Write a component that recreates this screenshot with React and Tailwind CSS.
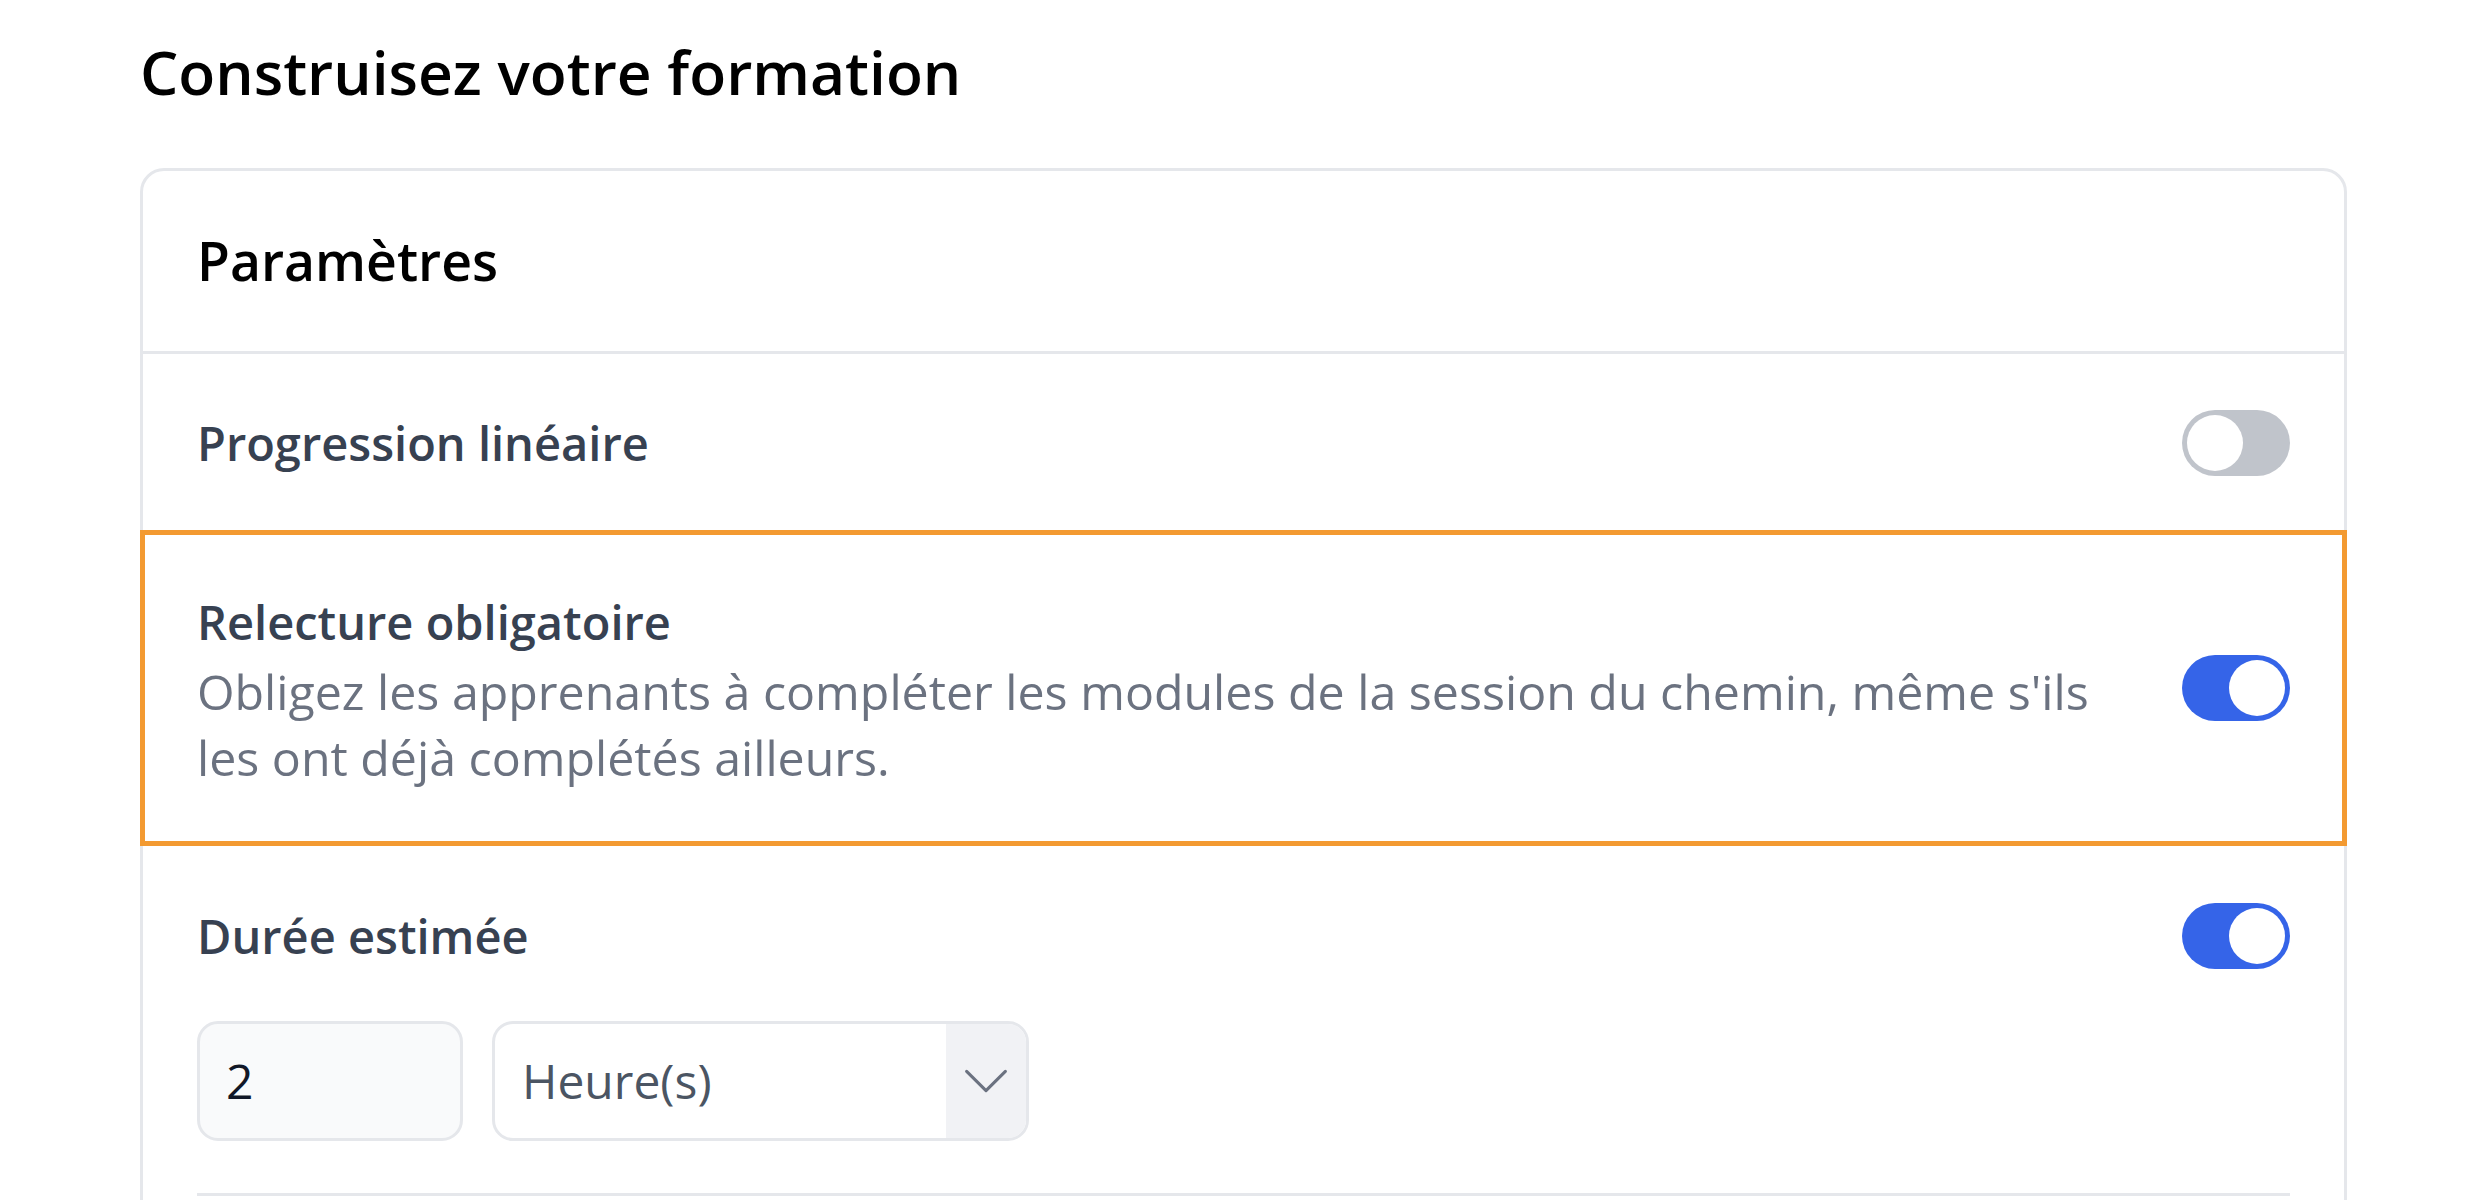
import { useState } from "react";

function classNames(...classes) {
  return classes.filter(Boolean).join(" ");
}

function Toggle({ enabled, onChange }) {
  return (
    <button
      type="button"
      onClick={() => onChange(!enabled)}
      className={classNames(
        enabled ? "bg-[#3564e8]" : "bg-[#c0c4cb]",
        "relative h-[66px] w-[108px] shrink-0 rounded-full"
      )}
    >
      <span
        className={classNames(
          enabled ? "translate-x-[42px]" : "translate-x-0",
          "absolute left-[5px] top-[5px] h-[56px] w-[56px] rounded-full bg-white"
        )}
      />
    </button>
  );
}

export default function App() {
  const [linear, setLinear] = useState(false); // progression linéaire
  const [review, setReview] = useState(true); // relecture obligatoire
  const [duration, setDuration] = useState(true); // durée estimée

  return (
    <div className="min-h-[1200px] bg-white font-['Open_Sans',sans-serif] pl-[140px] pt-[30px]">
      <h1 className="mb-[54px] text-[60.5px] font-semibold leading-[84px] text-black">
        Construisez votre formation
      </h1>

      <div className="w-[2207px] rounded-[24px] border-[3px] border-[#e5e7eb] bg-white">
        {/* header */}
        <div className="border-b-[3px] border-[#e5e7eb] px-[54px] py-[48px]">
          <h2 className="text-[53.5px] font-semibold leading-[84px] text-black">Paramètres</h2>
        </div>

        {/* progression linéaire */}
        <div className="flex items-center justify-between px-[54px] py-[53px]">
          <p className="text-[47px] font-semibold leading-[72px] text-[#374151]">
            Progression linéaire
          </p>
          <Toggle enabled={linear} onChange={setLinear} />
        </div>

        {/* relecture obligatoire, surlignée */}
        <div className="relative flex items-center justify-between gap-[60px] px-[54px] pt-[54px] pb-[56px]">
          <div className="max-w-[1920px]">
            <p className="text-[47px] font-semibold leading-[72px] text-[#374151]">
              Relecture obligatoire
            </p>
            <p className="text-[48.3px] leading-[66px] text-[#6b7280]">
              Obligez les apprenants à compléter les modules de la session du chemin, même s'ils les ont déjà complétés ailleurs.
            </p>
          </div>
          <Toggle enabled={review} onChange={setReview} />
          <span className="pointer-events-none absolute -left-[3px] -right-[3px] -top-[2px] bottom-0 border-[5px] border-[#f39a31]" />
        </div>

        {/* durée estimée */}
        <div className="px-[54px] pt-[54px]">
          <div className="flex items-center justify-between">
            <p className="text-[47px] font-semibold leading-[72px] text-[#374151]">Durée estimée</p>
            <Toggle enabled={duration} onChange={setDuration} />
          </div>
          <div className="mt-[49px] flex gap-[29px] pb-[52px]">
            <div className="flex h-[120px] w-[266px] items-center rounded-[21px] border-[3px] border-[#e5e7eb] bg-[#f9fafb] px-[26px]">
              <span className="text-[48px] leading-[72px] text-[#111827]">2</span>
            </div>
            <div className="flex h-[120px] w-[537px] overflow-hidden rounded-[21px] border-[3px] border-[#e5e7eb] bg-white">
              <span className="flex flex-1 items-center pl-[27px] text-[48px] leading-[72px] text-[#4b5563]">
                Heure(s)
              </span>
              <span className="flex w-[80px] items-center justify-center bg-[#f1f2f5]">
                <svg className="h-[62px] w-[62px] text-[#6b7280]" fill="none" viewBox="0 0 24 24" stroke="currentColor" strokeWidth={1.2}>
                  <path strokeLinecap="round" strokeLinejoin="round" d="m19.5 8.25-7.5 7.5-7.5-7.5" />
                </svg>
              </span>
            </div>
          </div>
          <div className="border-t-[3px] border-[#e5e7eb] pt-[54px] pb-[120px]" />
        </div>
      </div>
    </div>
  );
}
